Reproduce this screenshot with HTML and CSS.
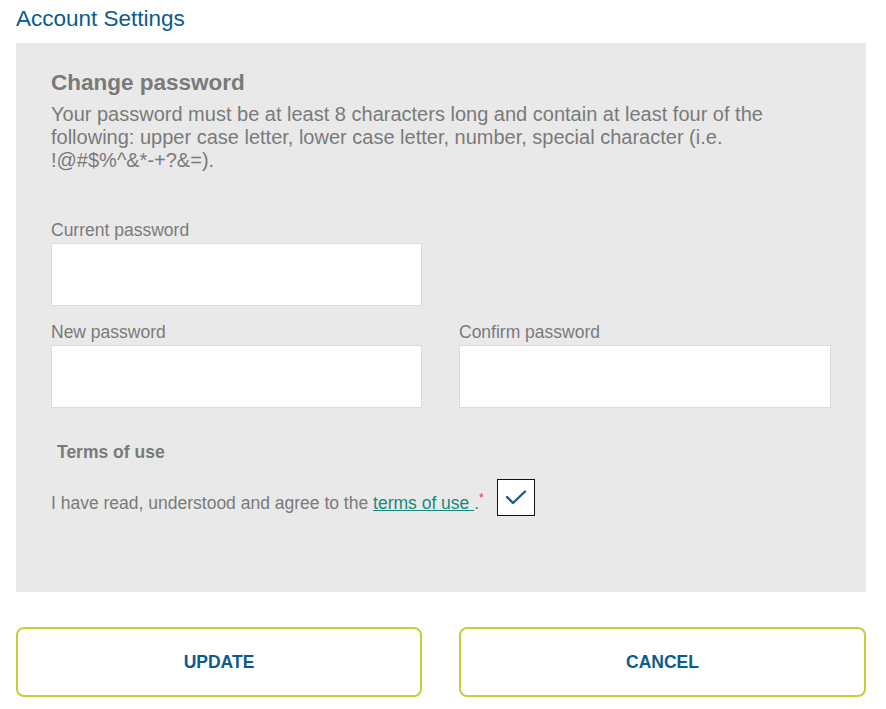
FILE: index.html
```html
<!DOCTYPE html>
<html lang="en">
<head>
<meta charset="utf-8">
<title>Account Settings</title>
<link rel="stylesheet" href="styles.css">
</head>
<body>
<div class="page">
  <h1 class="page-title">Account Settings</h1>
  <section class="panel">
    <h2 class="panel-title">Change password</h2>
    <p class="hint">Your password must be at least 8 characters long and contain at least four of the following: upper case letter, lower case letter, number, special character (i.e. !@#$%^&amp;*-+?&amp;=).</p>
    <div class="fields">
      <div class="field">
        <label class="label" for="cur">Current password</label>
        <input class="input" id="cur" type="password">
      </div>
      <div class="field"></div>
      <div class="field">
        <label class="label" for="new">New password</label>
        <input class="input" id="new" type="password">
      </div>
      <div class="field">
        <label class="label" for="conf">Confirm password</label>
        <input class="input" id="conf" type="password">
      </div>
    </div>
    <h3 class="terms-title">Terms of use</h3>
    <div class="agree">
      <span class="agree-text">I have read, understood and agree to the <a class="link" href="#">terms of use </a>.<sup class="req">*</sup></span>
      <span class="checkbox">
        <svg width="22" height="15" viewBox="0 0 22 15"><path d="M2 7 L8 13 L20 1.5" fill="none" stroke="#1c5a85" stroke-width="2.4" stroke-linecap="round" stroke-linejoin="round"/></svg>
      </span>
    </div>
  </section>
  <div class="actions">
    <button class="btn" type="button">UPDATE</button>
    <button class="btn" type="button">CANCEL</button>
  </div>
</div>
</body>
</html>
```

FILE: styles.css
```css
* { box-sizing: border-box; }
html, body { margin: 0; padding: 0; background: #fff; }
body { font-family: "Liberation Sans", Arial, sans-serif; }

.page {
  width: 850px;
  margin-left: 16px;
}

.page-title {
  margin: 0;
  padding-top: 7px;
  font-size: 22.5px;
  line-height: 24px;
  font-weight: normal;
  color: #0b5b8e;
}

.panel {
  margin-top: 12px;
  background: #e9e9e9;
  padding: 27px 36px 0 35px;
  height: 549px;
}

.panel-title {
  margin: 0;
  font-size: 22.5px;
  line-height: 26px;
  font-weight: bold;
  color: #7a7a7a;
}

.hint {
  margin: 7px 0 0;
  font-size: 20px;
  line-height: 23px;
  color: #7a7a7a;
}

.fields {
  margin-top: 48px;
  display: grid;
  grid-template-columns: 371px 372px;
  column-gap: 37px;
  row-gap: 16px;
}

.label {
  display: block;
  font-size: 17.5px;
  line-height: 20px;
  color: #7a7a7a;
  margin-bottom: 3px;
}

.input {
  display: block;
  width: 100%;
  height: 63px;
  margin: 0;
  border: 1px solid #dcdcdc;
  background: #fff;
  outline: none;
}

.terms-title {
  margin: 34px 0 0 6px;
  font-size: 17.5px;
  line-height: 20px;
  font-weight: bold;
  color: #7a7a7a;
}

.agree {
  margin-top: 17px;
  display: flex;
  align-items: center;
  gap: 13px;
}

.agree-text {
  font-size: 17.5px;
  line-height: 20px;
  color: #7a7a7a;
  padding-top: 10px;
}

.link {
  color: #17897a;
  text-decoration: underline;
}

.req {
  color: #e2333c;
  font-size: 12px;
  line-height: 0;
}

.checkbox {
  width: 38px;
  height: 37px;
  border: 1px solid #111;
  background: #fff;
  display: flex;
  align-items: center;
  justify-content: center;
}

.actions {
  margin-top: 35px;
  display: grid;
  grid-template-columns: 406px 407px;
  column-gap: 37px;
}

.btn {
  height: 70px;
  background: #fff;
  border: 2px solid #c6cf3a;
  border-radius: 8px;
  font-family: "Liberation Sans", Arial, sans-serif;
  font-size: 17.5px;
  font-weight: bold;
  color: #0b5b8e;
  cursor: pointer;
}
```
